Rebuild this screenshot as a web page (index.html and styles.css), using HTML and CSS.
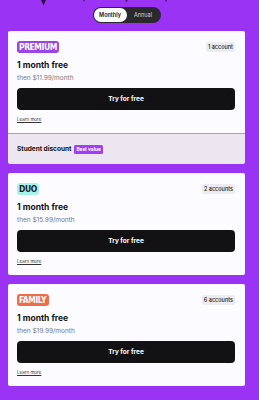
FILE: index.html
```html
<!DOCTYPE html>
<html>
<head>
<meta charset="utf-8">
<link rel="stylesheet" href="styles.css">
</head>
<body>
<div class="page">
  <svg class="drips" width="259" height="7" viewBox="0 0 259 7">
    <path d="M41 0 L43.5 5.5 L46 0 Z" fill="#2a1040"/>
    <path d="M83 0 L84 2 L85 0 Z" fill="#4a1a70"/>
    <path d="M125 0 L126.5 2.5 L128 0 Z" fill="#4a1a70"/>
    <path d="M165 0 L166 2.5 L167 0 Z" fill="#4a1a70"/>
  </svg>
  <div class="toggle-row">
    <div class="toggle">
      <span class="opt active">Monthly</span>
      <span class="opt">Annual</span>
    </div>
  </div>
  <div class="plans">
    <div class="plan-group">
      <div class="card">
        <div class="head">
          <span class="badge premium">PREMIUM</span>
          <span class="tag">1 account</span>
        </div>
        <div class="title">1 month free</div>
        <div class="sub">then $11.99/month</div>
        <button class="btn">Try for free</button>
        <a class="more">Learn more</a>
      </div>
      <div class="student">
        <span class="student-text">Student discount</span>
        <span class="best">Best value</span>
      </div>
    </div>
    <div class="card">
      <div class="head">
        <span class="badge duo">DUO</span>
        <span class="tag">2 accounts</span>
      </div>
      <div class="title">1 month free</div>
      <div class="sub">then $15.99/month</div>
      <button class="btn">Try for free</button>
      <a class="more">Learn more</a>
    </div>
    <div class="card">
      <div class="head">
        <span class="badge family">FAMILY</span>
        <span class="tag">6 accounts</span>
      </div>
      <div class="title">1 month free</div>
      <div class="sub">then $19.99/month</div>
      <button class="btn">Try for free</button>
      <a class="more">Learn more</a>
    </div>
  </div>
</div>
</body>
</html>
```
FILE: styles.css
```css
html, body {
  margin: 0;
  padding: 0;
  background: #9a33f4;
  font-family: Inter, "Noto Sans", sans-serif;
}
.page {
  padding: 0 14px 0 8px;
}
.drips {
  display: block;
  margin-left: -8px;
}
.toggle-row {
  display: flex;
  justify-content: center;
}
.toggle {
  display: flex;
  background: #2a2a2c;
  border-radius: 8px;
  padding: 1px;
  width: 66px;
  height: 14px;
}
.opt {
  flex: 1;
  display: flex;
  align-items: center;
  justify-content: center;
  font-size: 5.5px;
  color: #d8d8d8;
  border-radius: 7px;
}
.opt.active {
  background: #fff;
  color: #111;
  font-weight: 600;
}
.plans {
  display: flex;
  flex-direction: column;
  gap: 9px;
  margin-top: 8px;
}
.plan-group {
  display: flex;
  flex-direction: column;
}
.card {
  background: #fcfbff;
  border-radius: 2px;
  padding: 10px 10px 9px 9px;
  display: flex;
  flex-direction: column;
  align-items: flex-start;
}
.plan-group .card {
  border-radius: 2px 2px 0 0;
}
.head {
  display: flex;
  justify-content: space-between;
  align-items: center;
  width: 100%;
  height: 12px;
}
.badge {
  font-family: "DejaVu Sans Condensed", "Liberation Sans Narrow", sans-serif;
  font-weight: 700;
  font-size: 8.5px;
  letter-spacing: -0.45px;
  line-height: 12px;
  height: 12px;
  padding: 0 2.5px 0 2px;
  border-radius: 3px;
  color: #fff;
}
.premium { background: #9d45e3; }
.duo { background: #a6f2ec; color: #1a1a1a; }
.family { background: #ee6c47; }
.tag {
  font-size: 5.5px;
  font-weight: 500;
  color: #222;
  background: #ececf0;
  border-radius: 2px;
  padding: 0 2px;
  line-height: 10px;
}
.title {
  margin-top: 6px;
  font-size: 8.5px;
  font-weight: 700;
  line-height: 12px;
  color: #111;
}
.sub {
  margin-top: 2px;
  font-size: 6.5px;
  line-height: 10px;
  color: #777;
}
.btn {
  margin-top: 5px;
  width: 100%;
  height: 22px;
  border: 0;
  border-radius: 4px;
  background: #121214;
  color: #fff;
  font-family: Inter, "Noto Sans", sans-serif;
  font-weight: 700;
  font-size: 6.5px;
}
.more {
  margin-top: 6px;
  font-size: 4.5px;
  line-height: 8px;
  color: #333;
  text-decoration: underline;
}
.student {
  border-top: 1px solid #b98ae8;
  background: #ebe6ef;
  border-radius: 0 0 2px 2px;
  height: 30px;
  display: flex;
  align-items: center;
  gap: 3px;
  padding-left: 9px;
}
.student-text {
  font-size: 6.5px;
  font-weight: 700;
  color: #111;
}
.best {
  background: #a13ef1;
  color: #fff;
  font-size: 4.8px;
  font-weight: 700;
  line-height: 9px;
  padding: 0 2px;
  border-radius: 1.5px;
}
```
